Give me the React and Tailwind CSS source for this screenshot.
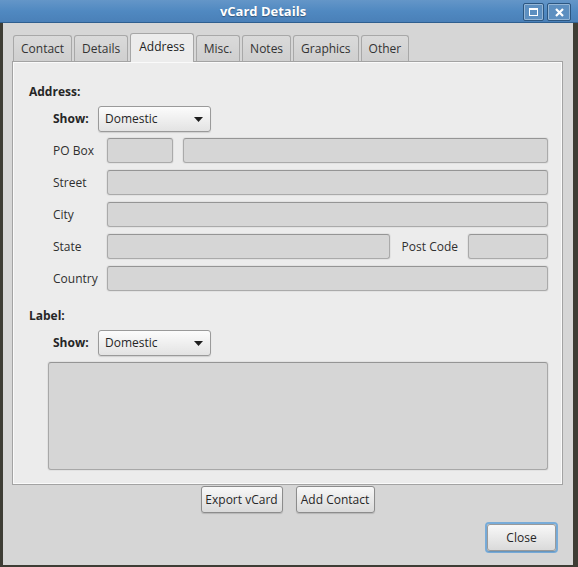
import React from 'react'

const tabs = ['Contact', 'Details', 'Address', 'Misc.', 'Notes', 'Graphics', 'Other']

const Field = ({ className = '' }) => (
  <div className={`h-[25px] rounded-[3px] border border-[#aaaaaa] border-t-[#959595] bg-[#d6d6d6] shadow-[0_0_0_1px_#e2e2e2] ${className}`} />
)

const Combo = () => (
  <div className="w-[113px] h-[26px] flex items-center justify-between pl-[6px] pr-[7px] rounded-[3px] border border-[#9a9a9a] bg-gradient-to-b from-[#fcfcfc] to-[#e3e3e3] shadow-[0_1px_1px_rgba(0,0,0,0.12)] text-[#262626]">
    <span>Domestic</span>
    <svg width="9" height="5" viewBox="0 0 9 5">
      <path d="M0 0h9L4.5 5z" fill="#1e1e1e" />
    </svg>
  </div>
)

const Row = ({ label, children }) => (
  <div className="flex items-center h-[25px] pl-[24px]">
    <span className="w-[54px] shrink-0 text-[#2f2f2f]">{label}</span>
    {children}
  </div>
)

const Btn = ({ children, className = '' }) => (
  <div className={`h-[27px] flex items-center justify-center rounded-[3px] border border-[#8c8c8c] bg-gradient-to-b from-[#f8f8f8] to-[#dadada] shadow-[0_1px_1px_rgba(0,0,0,0.15)] text-[#262626] ${className}`}>
    {children}
  </div>
)

export default function App() {
  return (
    <div className="w-[578px] h-[567px] flex flex-col bg-[#d6d6d6] font-['Open_Sans',sans-serif] text-[12px] leading-[16px] overflow-hidden">
      {/* Title bar */}
      <div className="h-[23px] shrink-0 relative flex items-center justify-center bg-gradient-to-b from-[#6496c8] via-[#5089c1] to-[#4a80b8] border-b border-[#2f5f8f]">
        <span className="mr-[52px] font-bold text-[13px] text-white [text-shadow:0_1px_1px_rgba(0,0,0,0.35)]">vCard Details</span>
        <div className="absolute right-[7px] top-[3px] flex gap-[3px]">
          <div className="w-[21px] h-[18px] flex items-center justify-center rounded-[2px] border border-[#2c5680] bg-[#5d8fc0] shadow-[inset_0_0_0_1px_rgba(255,255,255,0.35)]">
            <div className="w-[9px] h-[8px] border border-white border-t-2" />
          </div>
          <div className="w-[24px] h-[18px] flex items-center justify-center rounded-[2px] border border-[#2c5680] bg-[#5d8fc0] shadow-[inset_0_0_0_1px_rgba(255,255,255,0.35)]">
            <svg width="9" height="9" viewBox="0 0 9 9">
              <path d="M1 1l7 7M8 1l-7 7" stroke="white" strokeWidth="2.2" />
            </svg>
          </div>
        </div>
      </div>

      {/* Body */}
      <div className="flex-1 flex flex-col border-l-[3px] border-r-[5px] border-b-[2px] border-[#3e3d35] pl-[9px] pr-[10px] pt-[10px]">
        {/* Tabs */}
        <div className="flex items-end gap-[2px] pl-[1px] h-[28px] relative z-10">
          {tabs.map((t) =>
            t === 'Address' ? (
              <div key={t} className="h-[29px] -mb-px flex items-center px-[8px] pb-[2px] rounded-t-[3px] border border-b-0 border-[#a6a6a6] bg-[#ececec] text-[#222]">
                {t}
              </div>
            ) : (
              <div key={t} className="h-[26px] flex items-center px-[7px] rounded-t-[3px] border border-b-0 border-[#a8a8a8] bg-gradient-to-b from-[#dadada] to-[#cfcfcf] text-[#333]">
                {t}
              </div>
            )
          )}
        </div>

        {/* Panel */}
        <div className="h-[424px] flex flex-col border border-[#a3a3a3] bg-[#ececec] shadow-[inset_0_0_0_1px_#fafafa] pl-[16px] pr-[14px] pt-[22px]">
          <span className="font-bold text-[#262626]">Address:</span>
          <div className="flex items-center mt-[6px] pl-[24px]">
            <span className="w-[45px] font-bold text-[#262626]">Show:</span>
            <Combo />
          </div>
          <div className="flex flex-col gap-[7px] mt-[6px]">
            <Row label="PO Box">
              <Field className="w-[66px]" />
              <Field className="flex-1 ml-[10px]" />
            </Row>
            <Row label="Street">
              <Field className="flex-1" />
            </Row>
            <Row label="City">
              <Field className="flex-1" />
            </Row>
            <Row label="State">
              <Field className="flex-1" />
              <span className="ml-[12px] mr-[10px] text-[#2f2f2f]">Post Code</span>
              <Field className="w-[80px]" />
            </Row>
            <Row label="Country">
              <Field className="flex-1" />
            </Row>
          </div>
          <span className="mt-[17px] font-bold text-[#262626]">Label:</span>
          <div className="flex items-center mt-[6px] pl-[24px]">
            <span className="w-[45px] font-bold text-[#262626]">Show:</span>
            <Combo />
          </div>
          <div className="ml-[19px] mt-[6px] h-[108px] rounded-[3px] border border-[#a8a8a8] border-t-[#959595] bg-[#d6d6d6] shadow-[0_0_0_1px_#e2e2e2]" />
        </div>

        {/* Buttons */}
        <div className="flex justify-center gap-[13px] mt-[1px]">
          <Btn className="w-[82px]">Export vCard</Btn>
          <Btn className="w-[79px]">Add Contact</Btn>
        </div>
        <div className="flex justify-end mt-[9px] pr-[5px]">
          <div className="rounded-[4px] border-2 border-[#78acd9]">
            <Btn className="w-[69px] h-[23px] border-[#9a9a9a]">Close</Btn>
          </div>
        </div>
      </div>
    </div>
  )
}
